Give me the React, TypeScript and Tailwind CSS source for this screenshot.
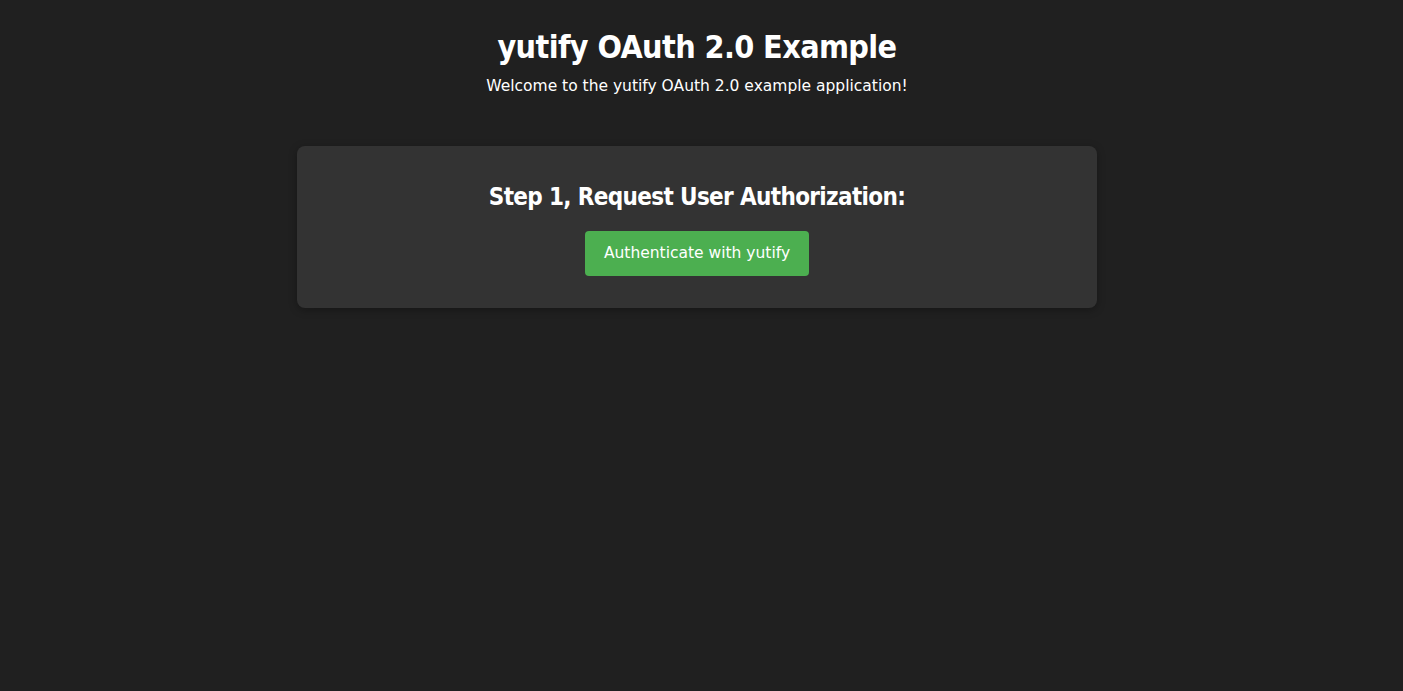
export default function App() {
  return (
    <div className="min-h-screen bg-[#202020] text-white flex flex-col items-center pr-[9px]" style={{ fontFamily: '"DejaVu Sans", Verdana, sans-serif' }}>
      <h1 className="mt-[28px] text-[32px] font-bold leading-[38px] font-stretch-condensed tracking-[-0.6px]">yutify OAuth 2.0 Example</h1>
      <p className="mt-[10px] text-[15.5px] leading-[20px]">Welcome to the yutify OAuth 2.0 example application!</p>
      <div className="mt-[50px] w-[800px] rounded-lg bg-[#333333] shadow-[0_2px_8px_rgba(0,0,0,0.3)] flex flex-col items-center pt-[36px] pb-[32px]">
        <h2 className="text-[24px] font-bold leading-[30px] font-stretch-condensed tracking-[-0.65px]">Step 1, Request User Authorization:</h2>
        <button className="mt-[19px] w-[224px] h-[45px] rounded bg-[#4caf50] text-[15.5px] text-white">Authenticate with yutify</button>
      </div>
    </div>
  );
}
